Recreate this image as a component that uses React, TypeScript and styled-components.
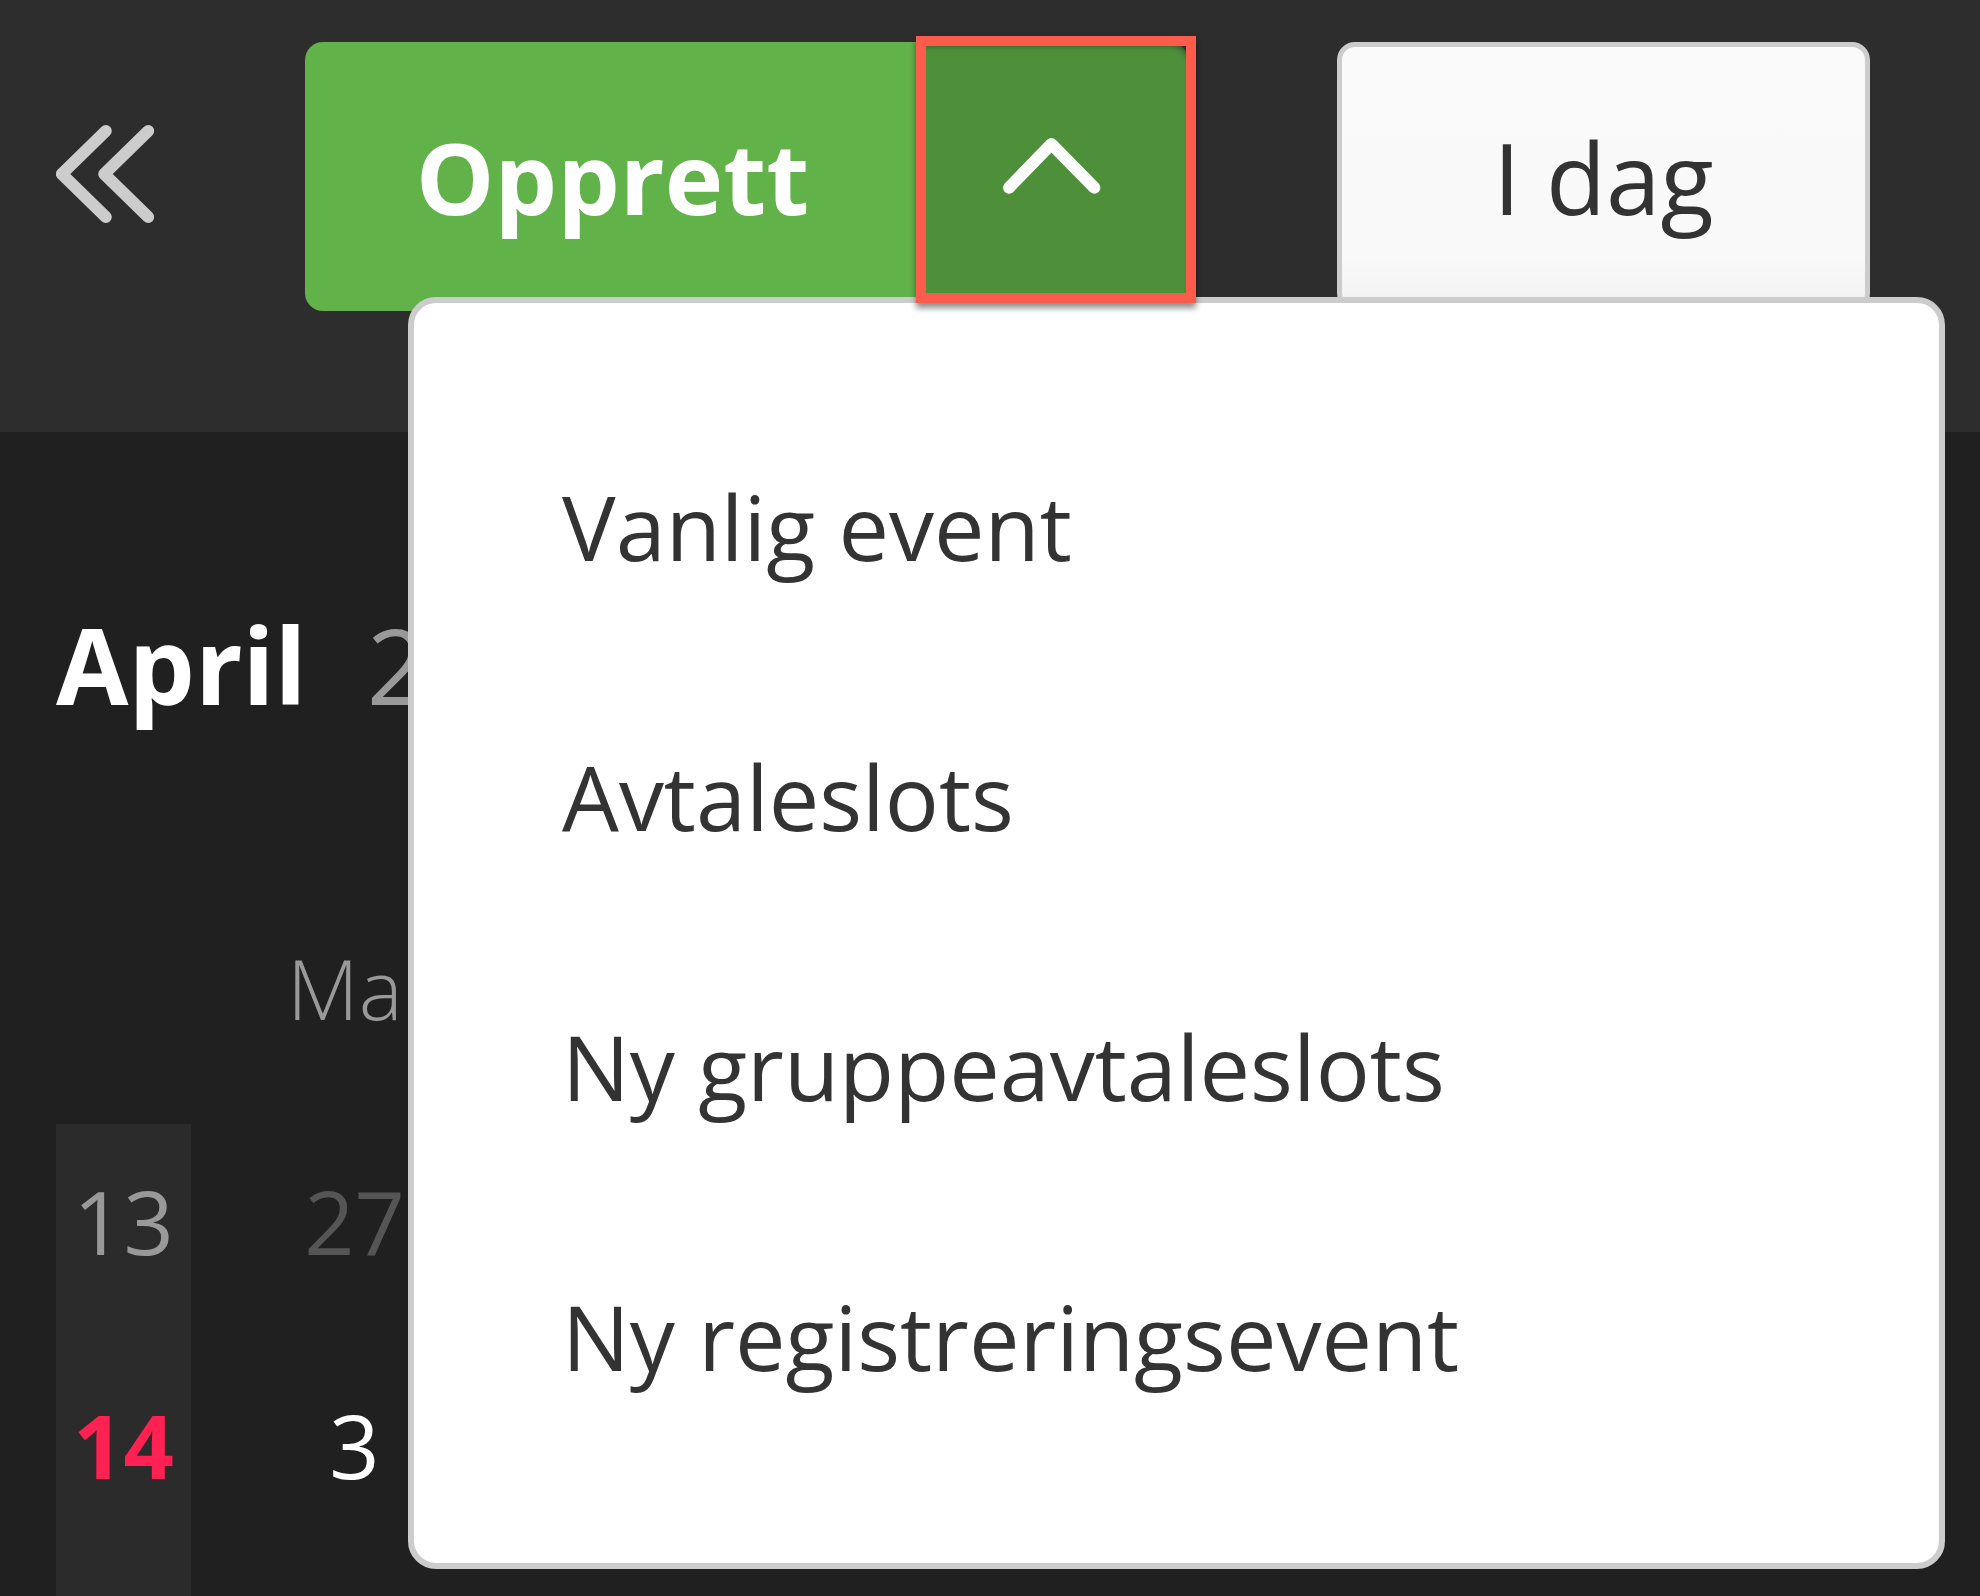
import React from 'react';
import styled, { createGlobalStyle } from 'styled-components';

const GlobalStyle = createGlobalStyle`
  html, body {
    margin: 0;
    padding: 0;
    background: #202020;
  }
  body {
    font-family: 'Open Sans', 'Liberation Sans', sans-serif;
  }
  * {
    box-sizing: border-box;
  }
`;

const Page = styled.div`
  width: 1980px;
  height: 1596px;
  overflow: hidden;
  background: #202020;
  display: flex;
  flex-direction: column;
`;

const Header = styled.header`
  flex: none;
  height: 432px;
  background: #2d2d2d;
  padding: 42px 0 0 56px;
  display: flex;
  align-items: flex-start;
  gap: 149px;
`;

const CollapseButton = styled.button`
  width: 100px;
  height: 269px;
  padding: 0 0 5px;
  border: none;
  background: transparent;
  display: flex;
  align-items: center;
  justify-content: center;
  cursor: pointer;
`;

const SplitButton = styled.div`
  position: relative;
  display: flex;
  height: 269px;
`;

const MainAction = styled.button`
  width: 615px;
  height: 100%;
  border: none;
  border-radius: 18px 0 0 18px;
  background: #61b249;
  color: #fff;
  font-family: 'Open Sans', sans-serif;
  font-weight: 700;
  font-size: 99px;
  display: flex;
  align-items: center;
  justify-content: center;
  padding: 0;
`;

const Toggle = styled.button`
  position: relative;
  width: 268px;
  height: 100%;
  border: none;
  border-radius: 0 18px 18px 0;
  background: #4e8f3a;
  box-shadow: inset 0 6px 6px -3px rgba(0, 0, 0, 0.5);
  display: flex;
  align-items: center;
  justify-content: center;
  padding: 0 4px 21px 0;
`;

// annotation frame drawn around the toggle in the screenshot
const Highlight = styled.span`
  position: absolute;
  left: -4px;
  top: -6px;
  width: 280px;
  height: 267px;
  border: 10px solid #fd5b4c;
  box-shadow: 0 5px 6px rgba(0, 0, 0, 0.45);
  z-index: 3;
  pointer-events: none;
`;

const Menu = styled.ul`
  position: absolute;
  left: 103px;
  top: 255px;
  width: 1537px;
  height: 1272px;
  margin: 0;
  padding: 88px 0 92px;
  list-style: none;
  background: #fff;
  border: 6px solid #cccccc;
  border-radius: 28px;
  z-index: 2;
`;

const MenuItem = styled.li`
  height: 270px;
  display: flex;
  align-items: center;
  padding-left: 148px;
  font-size: 90px;
  color: #333;
  white-space: nowrap;
`;

const TodayButton = styled.button`
  width: 533px;
  height: 269px;
  border: 5px solid #cccccc;
  border-radius: 18px;
  background: linear-gradient(#fafafa 0%, #f9f9f9 82%, #f1f1f1 100%);
  color: #333;
  font-family: 'Open Sans', sans-serif;
  font-size: 98px;
  display: flex;
  align-items: center;
  justify-content: center;
  padding: 0;
`;

const Calendar = styled.section`
  flex: 1;
  display: flex;
  flex-direction: column;
  padding: 158px 0 0 56px;
`;

const MonthTitle = styled.h1`
  margin: 0;
  display: flex;
  gap: 60px;
  font-size: 105px;
  line-height: 150px;
  font-weight: 700;
  color: #fff;
`;

const Year = styled.span`
  font-weight: 400;
  color: #999;
`;

const Columns = styled.div`
  display: grid;
  grid-template-columns: repeat(8, 135px);
  column-gap: 96px;
`;

const WeekdayRow = styled(Columns)`
  margin-top: 188px;
`;

const Weekday = styled.div`
  font-size: 83px;
  font-weight: 300;
  line-height: 120px;
  color: #999;
  white-space: nowrap;
`;

const WeekGrid = styled(Columns)`
  flex: 1;
  margin-top: 76px;
  grid-template-rows: 224px 1fr;
`;

const Cell = styled.div<{ $tone: 'muted' | 'dim' | 'day' | 'today'; $week?: boolean }>`
  line-height: 194px;
  font-size: 88px;
  text-align: center;
  background: ${(p) => (p.$week ? '#2b2b2b' : 'transparent')};
  font-weight: ${(p) => (p.$tone === 'today' ? 700 : 400)};
  color: ${(p) =>
    p.$tone === 'today' ? '#ff2152' : p.$tone === 'muted' ? '#999' : p.$tone === 'dim' ? '#555' : '#fff'};
`;

const weekdays = ['Ma', 'Ti', 'On', 'To', 'Fr', 'Lø', 'Sø'];

const weeks = [
  { week: 13, current: false, days: [27, 28, 29, 30, 31, 1, 2], firstInMonth: 5 },
  { week: 14, current: true, days: [3, 4, 5, 6, 7, 8, 9], firstInMonth: 0 },
];

const menuItems = ['Vanlig event', 'Avtaleslots', 'Ny gruppeavtaleslots', 'Ny registreringsevent'];

const DoubleChevron = () => (
  <svg width="100" height="100" viewBox="0 0 100 100" fill="none">
    <polyline
      points="49.8,7 5.8,50 49.8,93"
      stroke="#cccccc"
      strokeWidth="12"
      strokeLinecap="round"
      strokeLinejoin="round"
    />
    <polyline
      points="92.2,7 48.2,50 92.2,93"
      stroke="#cccccc"
      strokeWidth="12"
      strokeLinecap="round"
      strokeLinejoin="round"
    />
  </svg>
);

const ChevronUp = () => (
  <svg width="98" height="56" viewBox="0 0 98 56" fill="none">
    <polyline
      points="6,49.7 48.4,6 91.4,49.7"
      stroke="#fff"
      strokeWidth="12"
      strokeLinecap="round"
      strokeLinejoin="round"
    />
  </svg>
);

export default function App() {
  return (
    <Page>
      <GlobalStyle />
      <Header>
        <CollapseButton aria-label="Skjul">
          <DoubleChevron />
        </CollapseButton>
        <SplitButton>
          <MainAction>Opprett</MainAction>
          <Toggle aria-label="Vis valg">
            <ChevronUp />
            <Highlight />
          </Toggle>
          <Menu>
            {menuItems.map((item) => (
              <MenuItem key={item}>{item}</MenuItem>
            ))}
          </Menu>
        </SplitButton>
        <TodayButton>I dag</TodayButton>
      </Header>
      <Calendar>
        <MonthTitle>
          April <Year>2023</Year>
        </MonthTitle>
        <WeekdayRow>
          <div />
          {weekdays.map((d) => (
            <Weekday key={d}>{d}</Weekday>
          ))}
        </WeekdayRow>
        <WeekGrid>
          {weeks.map((w) => (
            <React.Fragment key={w.week}>
              <Cell $week $tone={w.current ? 'today' : 'muted'}>
                {w.week}
              </Cell>
              {w.days.map((d, i) => (
                <Cell key={i} $tone={i < w.firstInMonth ? 'dim' : 'day'}>
                  {d}
                </Cell>
              ))}
            </React.Fragment>
          ))}
        </WeekGrid>
      </Calendar>
    </Page>
  );
}
